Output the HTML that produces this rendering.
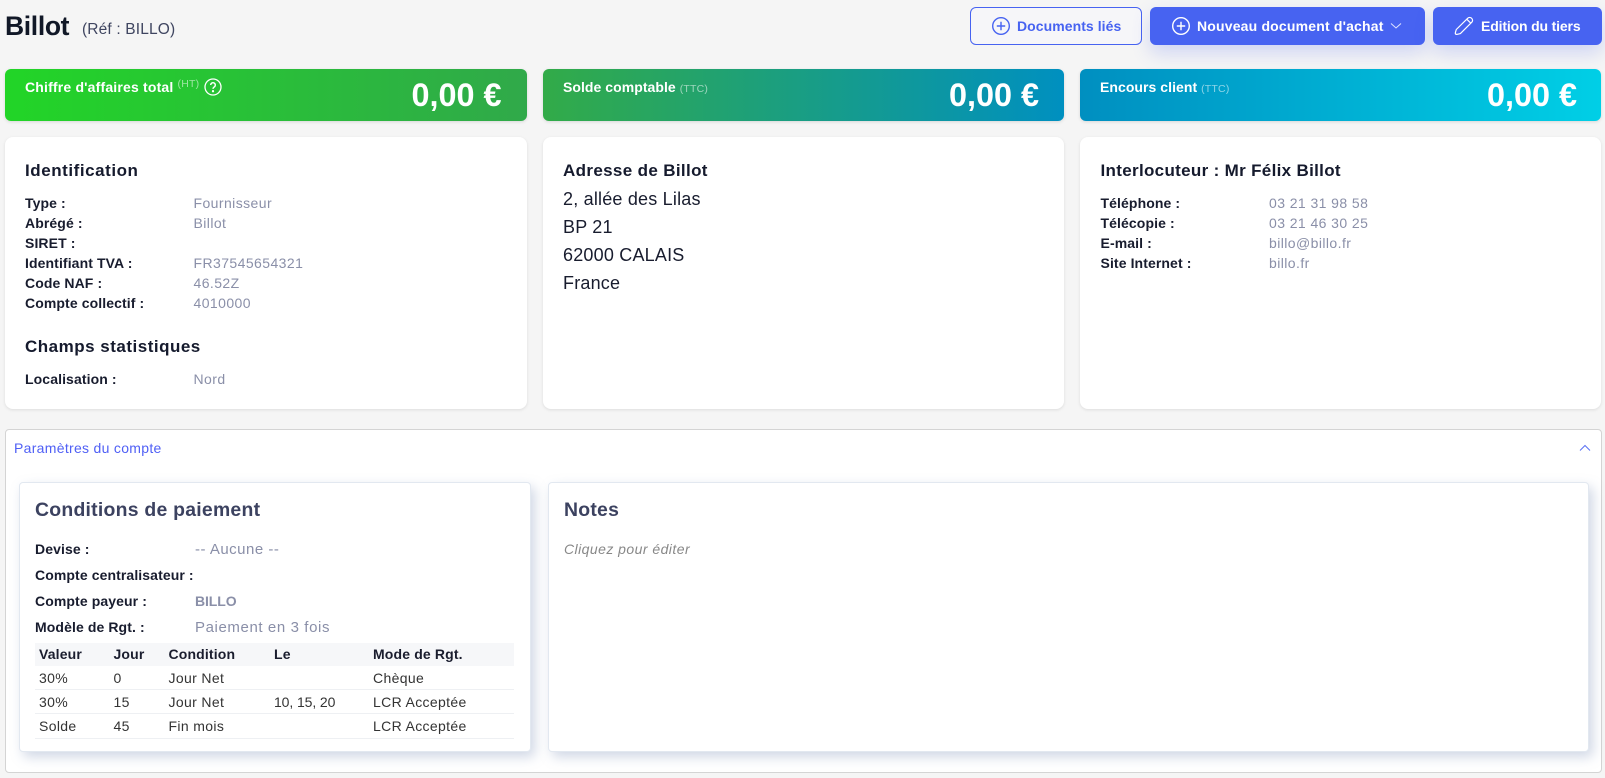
<!DOCTYPE html>
<html lang="fr">
<head>
<meta charset="utf-8">
<title>Billot</title>
<style>
*{box-sizing:border-box}
html,body{margin:0;padding:0}
body{width:1605px;height:778px;background:#f5f5f5;overflow:hidden;position:relative;font-family:"Liberation Sans",sans-serif;color:#111827;font-size:14px}
.a,.t{position:absolute;white-space:nowrap}
.t{line-height:20px;height:20px;font-size:14px;letter-spacing:.42px}
.b{font-weight:700;color:#181c2e;letter-spacing:.1px}
.v{color:#8a8fa8}
.h{font-weight:700;font-size:17px;color:#151a2d;letter-spacing:.35px;line-height:24px;height:24px}
.btn{position:absolute;top:7px;height:38px;border-radius:6px;background:#4763f1;box-shadow:0 8px 18px rgba(71,99,241,.22)}
.btnt{position:absolute;color:#fff;font-weight:700;font-size:14px;line-height:20px;top:16px;white-space:nowrap}
.kpi{position:absolute;top:69px;height:52px;border-radius:6px;box-shadow:0 1px 3px rgba(0,0,0,.12);width:521.3px}
.card{position:absolute;top:137px;height:272px;width:521.3px;background:#fff;border-radius:8px;box-shadow:0 1px 3px rgba(0,0,0,.1)}
.kl{position:absolute;color:#fff;font-weight:700;font-size:14px;line-height:20px;top:77px;white-space:nowrap;letter-spacing:.05px}
.ks{font-weight:400;font-size:10.5px;opacity:.55;letter-spacing:.2px}
.kv{position:absolute;color:#fff;font-weight:700;font-size:32.4px;line-height:40px;top:75px;white-space:nowrap}
.in{position:absolute;top:482px;height:269.5px;background:#fff;border:1px solid #e2e8f0;border-radius:4px;box-shadow:4px 5px 12px rgba(120,140,180,.35)}
.ti{font-weight:700;font-size:19.4px;color:#3c4260;line-height:26px;height:26px;letter-spacing:.25px}
.th{font-weight:700;color:#1a1d2e;letter-spacing:.15px}
.c{color:#333;letter-spacing:.35px}
.ad{font-size:18px;color:#181c2e;letter-spacing:.2px}
</style>
</head>
<body>
<div class="a" style="left:5px;top:8px;font-size:26.5px;font-weight:700;line-height:36px;color:#111827;letter-spacing:-.35px">Billot</div>
<div class="a" style="left:82px;top:20px;font-size:15.5px;line-height:20px;color:#3f4560;letter-spacing:.15px">(Réf : BILLO)</div>

<div class="a" style="left:970px;top:7px;width:172px;height:38px;border:1px solid #4763f1;border-radius:6px;background:#f6f6f9"></div>
<svg class="a" style="left:991px;top:16px" width="20" height="20" viewBox="0 0 20 20" fill="none" stroke="#4763f1" stroke-width="1.4"><circle cx="10" cy="10" r="8.3"/><path d="M10 5.8v8.4M5.8 10h8.4"/></svg>
<div class="btnt" style="left:1017px;color:#4763f1;letter-spacing:.06px">Documents liés</div>

<div class="btn" style="left:1150px;width:275px"></div>
<svg class="a" style="left:1171px;top:16px" width="20" height="20" viewBox="0 0 20 20" fill="none" stroke="#fff" stroke-width="1.4"><circle cx="10" cy="10" r="8.3"/><path d="M10 5.8v8.4M5.8 10h8.4"/></svg>
<div class="btnt" style="left:1197px;letter-spacing:.18px">Nouveau document d'achat</div>
<svg class="a" style="left:1390px;top:22px" width="12" height="8" viewBox="0 0 12 8" fill="none" stroke="#dfe4ff" stroke-width="1"><path d="M1 1.5l5 4.5 5-4.5"/></svg>

<div class="btn" style="left:1433px;width:168.5px"></div>
<svg class="a" style="left:1454px;top:16px" width="20" height="20" viewBox="0 0 20 20" fill="none" stroke="#fff" stroke-width="1.2" stroke-linejoin="round"><path d="M2.2 18.4c-.9-.2-1-1-.8-1.9l.9-3L13.8 2.2a2.6 2.6 0 0 1 3.7 0l.3.3a2.6 2.6 0 0 1 0 3.7L6.4 17.6l-3 .7z"/><path d="M13 3.4l3.7 3.7"/></svg>
<div class="btnt" style="left:1481px;letter-spacing:-.15px">Edition du tiers</div>

<div class="kpi" style="left:5px;width:522px;background:linear-gradient(90deg,#22d527,#30a94a)"></div>
<div class="kpi" style="left:542.8px;background:linear-gradient(90deg,#32ab48,#0090c0)"></div>
<div class="kpi" style="left:1080px;background:linear-gradient(90deg,#008fc0,#00cfe6)"></div>
<div class="kl" style="left:25px;letter-spacing:.18px">Chiffre d'affaires total <sup class="ks" style="vertical-align:5px;line-height:0">(HT)</sup></div>
<svg class="a" style="left:204px;top:78px" width="18" height="18" viewBox="0 0 18 18" fill="none" stroke="#fff" stroke-width="1.3"><circle cx="9" cy="9" r="8"/><path d="M6.7 7a2.3 2.3 0 1 1 3.5 2c-.8.5-1.2 1-1.2 1.9" stroke-width="1.4"/><circle cx="9" cy="13.2" r=".5" fill="#fff"/></svg>
<div class="kl" style="left:563px">Solde comptable <span class="ks">(TTC)</span></div>
<div class="kl" style="left:1100px">Encours client <span class="ks">(TTC)</span></div>
<div class="kv" style="left:411.5px">0,00 €</div>
<div class="kv" style="left:949px">0,00 €</div>
<div class="kv" style="left:1487px">0,00 €</div>

<div class="card" style="left:5px;width:522px"></div>
<div class="card" style="left:542.8px"></div>
<div class="card" style="left:1080px"></div>

<div class="t h" style="left:25px;top:159px;letter-spacing:.55px">Identification</div>
<div class="t b" style="left:25px;top:193px">Type :</div><div class="t v" style="left:193.5px;top:193px">Fournisseur</div>
<div class="t b" style="left:25px;top:213px">Abrégé :</div><div class="t v" style="left:193.5px;top:213px">Billot</div>
<div class="t b" style="left:25px;top:233px">SIRET :</div>
<div class="t b" style="left:25px;top:253px">Identifiant TVA :</div><div class="t v" style="left:193.5px;top:253px">FR37545654321</div>
<div class="t b" style="left:25px;top:273px">Code NAF :</div><div class="t v" style="left:193.5px;top:273px">46.52Z</div>
<div class="t b" style="left:25px;top:293px">Compte collectif :</div><div class="t v" style="left:193.5px;top:293px">4010000</div>
<div class="t h" style="left:25px;top:335px;letter-spacing:.5px">Champs statistiques</div>
<div class="t b" style="left:25px;top:369px">Localisation :</div><div class="t v" style="left:193.5px;top:369px">Nord</div>

<div class="t h" style="left:563px;top:159px">Adresse de Billot</div>
<div class="t ad" style="left:563px;top:189px">2, allée des Lilas</div>
<div class="t ad" style="left:563px;top:217px">BP 21</div>
<div class="t ad" style="left:563px;top:245px">62000 CALAIS</div>
<div class="t ad" style="left:563px;top:273px">France</div>

<div class="t h" style="left:1100.5px;top:159px;letter-spacing:.32px">Interlocuteur : Mr Félix Billot</div>
<div class="t b" style="left:1100.5px;top:193px">Téléphone :</div><div class="t v" style="left:1269px;top:193px">03 21 31 98 58</div>
<div class="t b" style="left:1100.5px;top:213px">Télécopie :</div><div class="t v" style="left:1269px;top:213px">03 21 46 30 25</div>
<div class="t b" style="left:1100.5px;top:233px">E-mail :</div><div class="t v" style="left:1269px;top:233px">billo@billo.fr</div>
<div class="t b" style="left:1100.5px;top:253px">Site Internet :</div><div class="t v" style="left:1269px;top:253px">billo.fr</div>

<div class="a" style="left:5px;top:429px;width:1597px;height:343.5px;background:#fff;border:1px solid #d4d4d4;border-radius:4px"></div>
<div class="t" style="left:14px;top:438px;color:#4f5ff5;letter-spacing:.3px">Paramètres du compte</div>
<svg class="a" style="left:1579px;top:444px" width="12" height="8" viewBox="0 0 12 8" fill="none" stroke="#5a70f3" stroke-width="1"><path d="M1 6.5l5-5 5 5"/></svg>

<div class="in" style="left:18.5px;width:512px"></div>
<div class="in" style="left:547.5px;width:1041px"></div>

<div class="t ti" style="left:35px;top:497px">Conditions de paiement</div>
<div class="t ti" style="left:564px;top:497px">Notes</div>
<div class="t" style="left:564px;top:539px;font-style:italic;color:#888;letter-spacing:.45px">Cliquez pour éditer</div>

<div class="t b" style="left:35px;top:539px">Devise :</div><div class="t v" style="left:195px;top:540px;font-size:15px;letter-spacing:.5px">-- Aucune --</div>
<div class="t b" style="left:35px;top:565px">Compte centralisateur :</div>
<div class="t b" style="left:35px;top:591px">Compte payeur :</div><div class="t v" style="left:195px;top:591px;font-weight:700;letter-spacing:-.1px">BILLO</div>
<div class="t b" style="left:35px;top:617px">Modèle de Rgt. :</div><div class="t v" style="left:195px;top:618px;font-size:15px;letter-spacing:.6px">Paiement en 3 fois</div>

<div class="a" style="left:35px;top:643px;width:479px;height:23px;background:#f6f7f9"></div>
<div class="a" style="left:35px;top:689px;width:479px;height:1px;background:#eef0f3"></div>
<div class="a" style="left:35px;top:713px;width:479px;height:1px;background:#eef0f3"></div>
<div class="a" style="left:35px;top:738px;width:479px;height:1px;background:#eef0f3"></div>

<div class="t th" style="left:39px;top:644px">Valeur</div>
<div class="t th" style="left:113.5px;top:644px">Jour</div>
<div class="t th" style="left:168.5px;top:644px">Condition</div>
<div class="t th" style="left:274px;top:644px">Le</div>
<div class="t th" style="left:373px;top:644px">Mode de Rgt.</div>

<div class="t c" style="left:39px;top:668px">30%</div><div class="t c" style="left:113.5px;top:668px">0</div><div class="t c" style="left:168.5px;top:668px">Jour Net</div><div class="t c" style="left:373px;top:668px">Chèque</div>
<div class="t c" style="left:39px;top:692px">30%</div><div class="t c" style="left:113.5px;top:692px">15</div><div class="t c" style="left:168.5px;top:692px">Jour Net</div><div class="t c" style="left:274px;top:692px;letter-spacing:-.1px">10, 15, 20</div><div class="t c" style="left:373px;top:692px">LCR Acceptée</div>
<div class="t c" style="left:39px;top:716px">Solde</div><div class="t c" style="left:113.5px;top:716px">45</div><div class="t c" style="left:168.5px;top:716px">Fin mois</div><div class="t c" style="left:373px;top:716px">LCR Acceptée</div>
</body>
</html>
